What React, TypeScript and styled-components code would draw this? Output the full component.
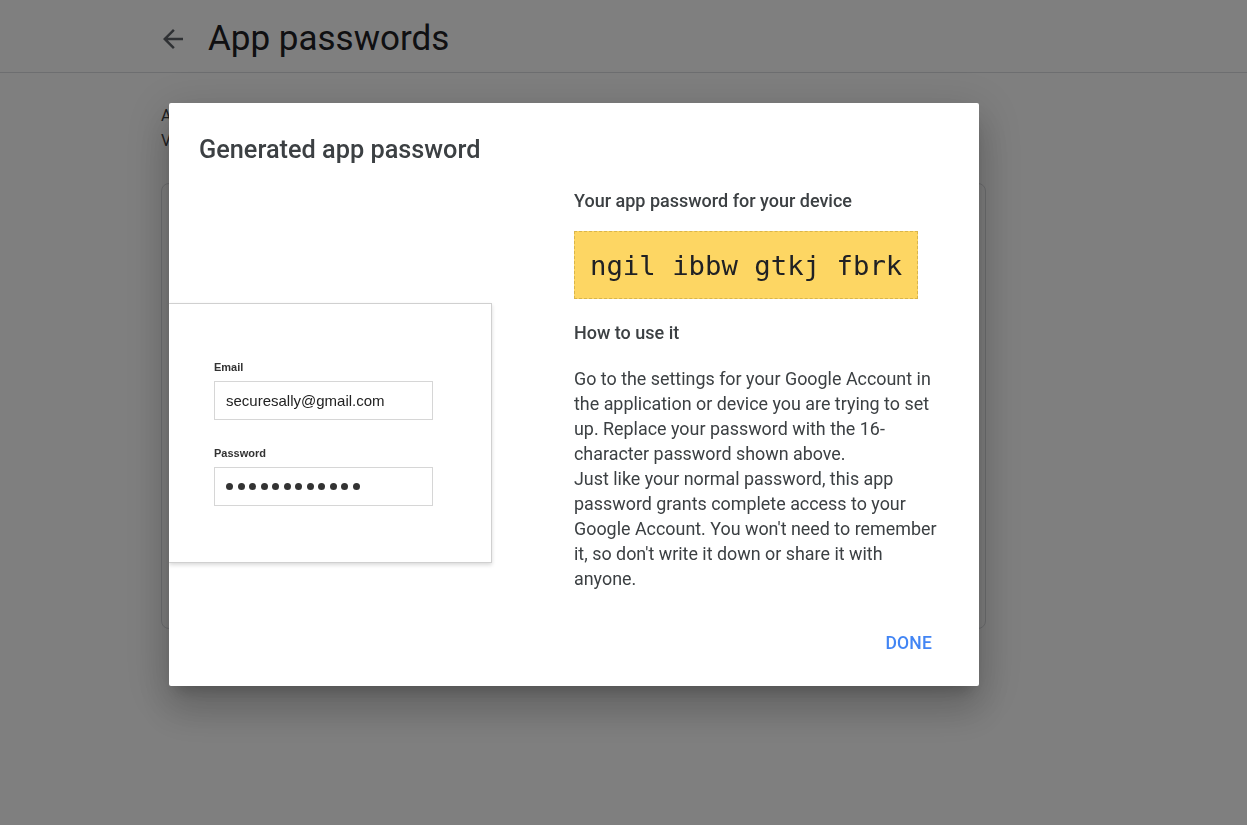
import { createGlobalStyle, styled } from "styled-components";

const GlobalStyle = createGlobalStyle`
  html, body {
    margin: 0;
    padding: 0;
    background: #ffffff;
  }
  body {
    font-family: Roboto, "Liberation Sans", Arial, sans-serif;
    color: #202124;
  }
  * {
    box-sizing: border-box;
  }
`;

const Page = styled.div`
  min-height: 825px;
  background: #ffffff;
`;

const Header = styled.header`
  height: 73px;
  border-bottom: 1px solid #dadce0;
  display: flex;
  align-items: center;
  padding: 5px 0 0 158px;
  gap: 20px;
`;

const BackButton = styled.div`
  width: 30px;
  height: 30px;
  display: flex;
  color: #5f6368;
  svg {
    width: 30px;
    height: 30px;
    fill: currentColor;
  }
`;

const PageTitle = styled.h1`
  margin: 0;
  font-family: Roboto, sans-serif;
  font-weight: 400;
  font-size: 35px;
  color: #202124;
  line-height: 40px;
`;

const Main = styled.main`
  margin-left: 161px;
  width: 825px;
  padding-top: 30px;
`;

const Intro = styled.p`
  margin: 0 0 30px;
  font-size: 16px;
  line-height: 25px;
  color: #3c4043;
`;

const Card = styled.div`
  height: 446px;
  border: 1px solid #dadce0;
  border-radius: 8px;
`;

const Scrim = styled.div`
  position: fixed;
  inset: 0;
  background: rgba(0, 0, 0, 0.5);
`;

const Dialog = styled.div`
  position: fixed;
  left: 169px;
  top: 103px;
  width: 810px;
  height: 583px;
  background: #ffffff;
  border-radius: 2px;
  display: flex;
  flex-direction: column;
  overflow: hidden;
  box-shadow: 0 11px 15px -7px rgba(0, 0, 0, 0.2),
    0 24px 38px 3px rgba(0, 0, 0, 0.14), 0 9px 46px 8px rgba(0, 0, 0, 0.12);
`;

const DialogTitle = styled.h2`
  margin: 0;
  padding: 31px 30px 0;
  font-family: Roboto, sans-serif;
  font-weight: 500;
  font-size: 25.3px;
  line-height: 32px;
  color: #3c4043;
`;

const DialogBody = styled.div`
  display: flex;
  margin-top: 23px;
`;

const Illustration = styled.div`
  width: 405px;
  flex-shrink: 0;
  padding-top: 114px;
`;

const SignInCard = styled.div`
  width: 323px;
  height: 260px;
  background: #ffffff;
  border: 1px solid #d0d0d0;
  border-left: none;
  box-shadow: 0 2px 4px rgba(0, 0, 0, 0.15);
  padding: 56px 0 0 45px;
  font-family: "Liberation Sans", Arial, sans-serif;
`;

const FieldLabel = styled.div<{ $gap?: number }>`
  font-size: 11px;
  font-weight: 700;
  line-height: 14px;
  color: #333333;
  margin-top: ${(p) => p.$gap ?? 0}px;
  margin-bottom: 7px;
`;

const FieldBox = styled.div`
  width: 219px;
  height: 39px;
  border: 1.5px solid #d6d6d6;
  display: flex;
  align-items: center;
  padding-left: 11px;
  font-size: 15px;
  color: #222222;
`;

const Dots = styled.div`
  display: flex;
  gap: 4.5px;
`;

const Dot = styled.span`
  width: 7px;
  height: 7px;
  border-radius: 50%;
  background: #333333;
`;

const Details = styled.div`
  width: 367px;
  color: #3c4043;
`;

const Heading = styled.h3<{ $top?: number }>`
  margin: ${(p) => p.$top ?? 0}px 0 0;
  font-size: 18px;
  font-weight: 500;
  line-height: 24px;
  color: #3c4043;
`;

const PasswordBox = styled.div`
  margin-top: 18px;
  width: 344px;
  height: 68px;
  background: #fdd663;
  border: 1px dashed #d9b54c;
  display: flex;
  align-items: center;
  padding-left: 15px;
  font-family: "DejaVu Sans Mono", "Liberation Mono", monospace;
  font-size: 27.3px;
  color: #202124;
  white-space: pre;
`;

const Instructions = styled.p`
  margin: 21px 0 0;
  font-size: 17.9px;
  line-height: 25px;
  color: #3c4043;
`;

const DialogFooter = styled.div`
  margin-top: auto;
  display: flex;
  justify-content: flex-end;
  padding: 0 39px 25px 0;
`;

const TextButton = styled.button`
  border: none;
  background: none;
  padding: 0 8px;
  height: 36px;
  font-family: Roboto, sans-serif;
  font-size: 17.5px;
  font-weight: 500;
  letter-spacing: 0.2px;
  color: #4285f4;
  cursor: pointer;
`;

const App = () => {
  return (
    <>
      <GlobalStyle />
      <Page>
        <Header>
          <BackButton>
            <svg viewBox="0 0 24 24">
              <path d="M20 11H7.83l5.59-5.59L12 4l-8 8 8 8 1.41-1.41L7.83 13H20v-2z" />
            </svg>
          </BackButton>
          <PageTitle>App passwords</PageTitle>
        </Header>
        <Main>
          <Intro>
            App passwords let you sign in to your Google Account from apps on
            devices that don't support 2-Step
            <br />
            Verification. You'll only need to enter it once so you don't need
            to remember it.
          </Intro>
          <Card />
        </Main>
      </Page>
      <Scrim />
      <Dialog>
        <DialogTitle>Generated app password</DialogTitle>
        <DialogBody>
          <Illustration>
            <SignInCard>
              <FieldLabel>Email</FieldLabel>
              <FieldBox>securesally@gmail.com</FieldBox>
              <FieldLabel $gap={26}>Password</FieldLabel>
              <FieldBox>
                <Dots>
                  {Array.from({ length: 12 }).map((_, i) => (
                    <Dot key={i} />
                  ))}
                </Dots>
              </FieldBox>
            </SignInCard>
          </Illustration>
          <Details>
            <Heading>Your app password for your device</Heading>
            <PasswordBox>ngil ibbw gtkj fbrk</PasswordBox>
            <Heading $top={22}>How to use it</Heading>
            <Instructions>
              Go to the settings for your Google Account in the application or
              device you are trying to set up. Replace your password with the
              16-character password shown above.
              <br />
              Just like your normal password, this app password grants complete
              access to your Google Account. You won't need to remember it, so
              don't write it down or share it with anyone.
            </Instructions>
          </Details>
        </DialogBody>
        <DialogFooter>
          <TextButton>DONE</TextButton>
        </DialogFooter>
      </Dialog>
    </>
  );
};

export default App;
